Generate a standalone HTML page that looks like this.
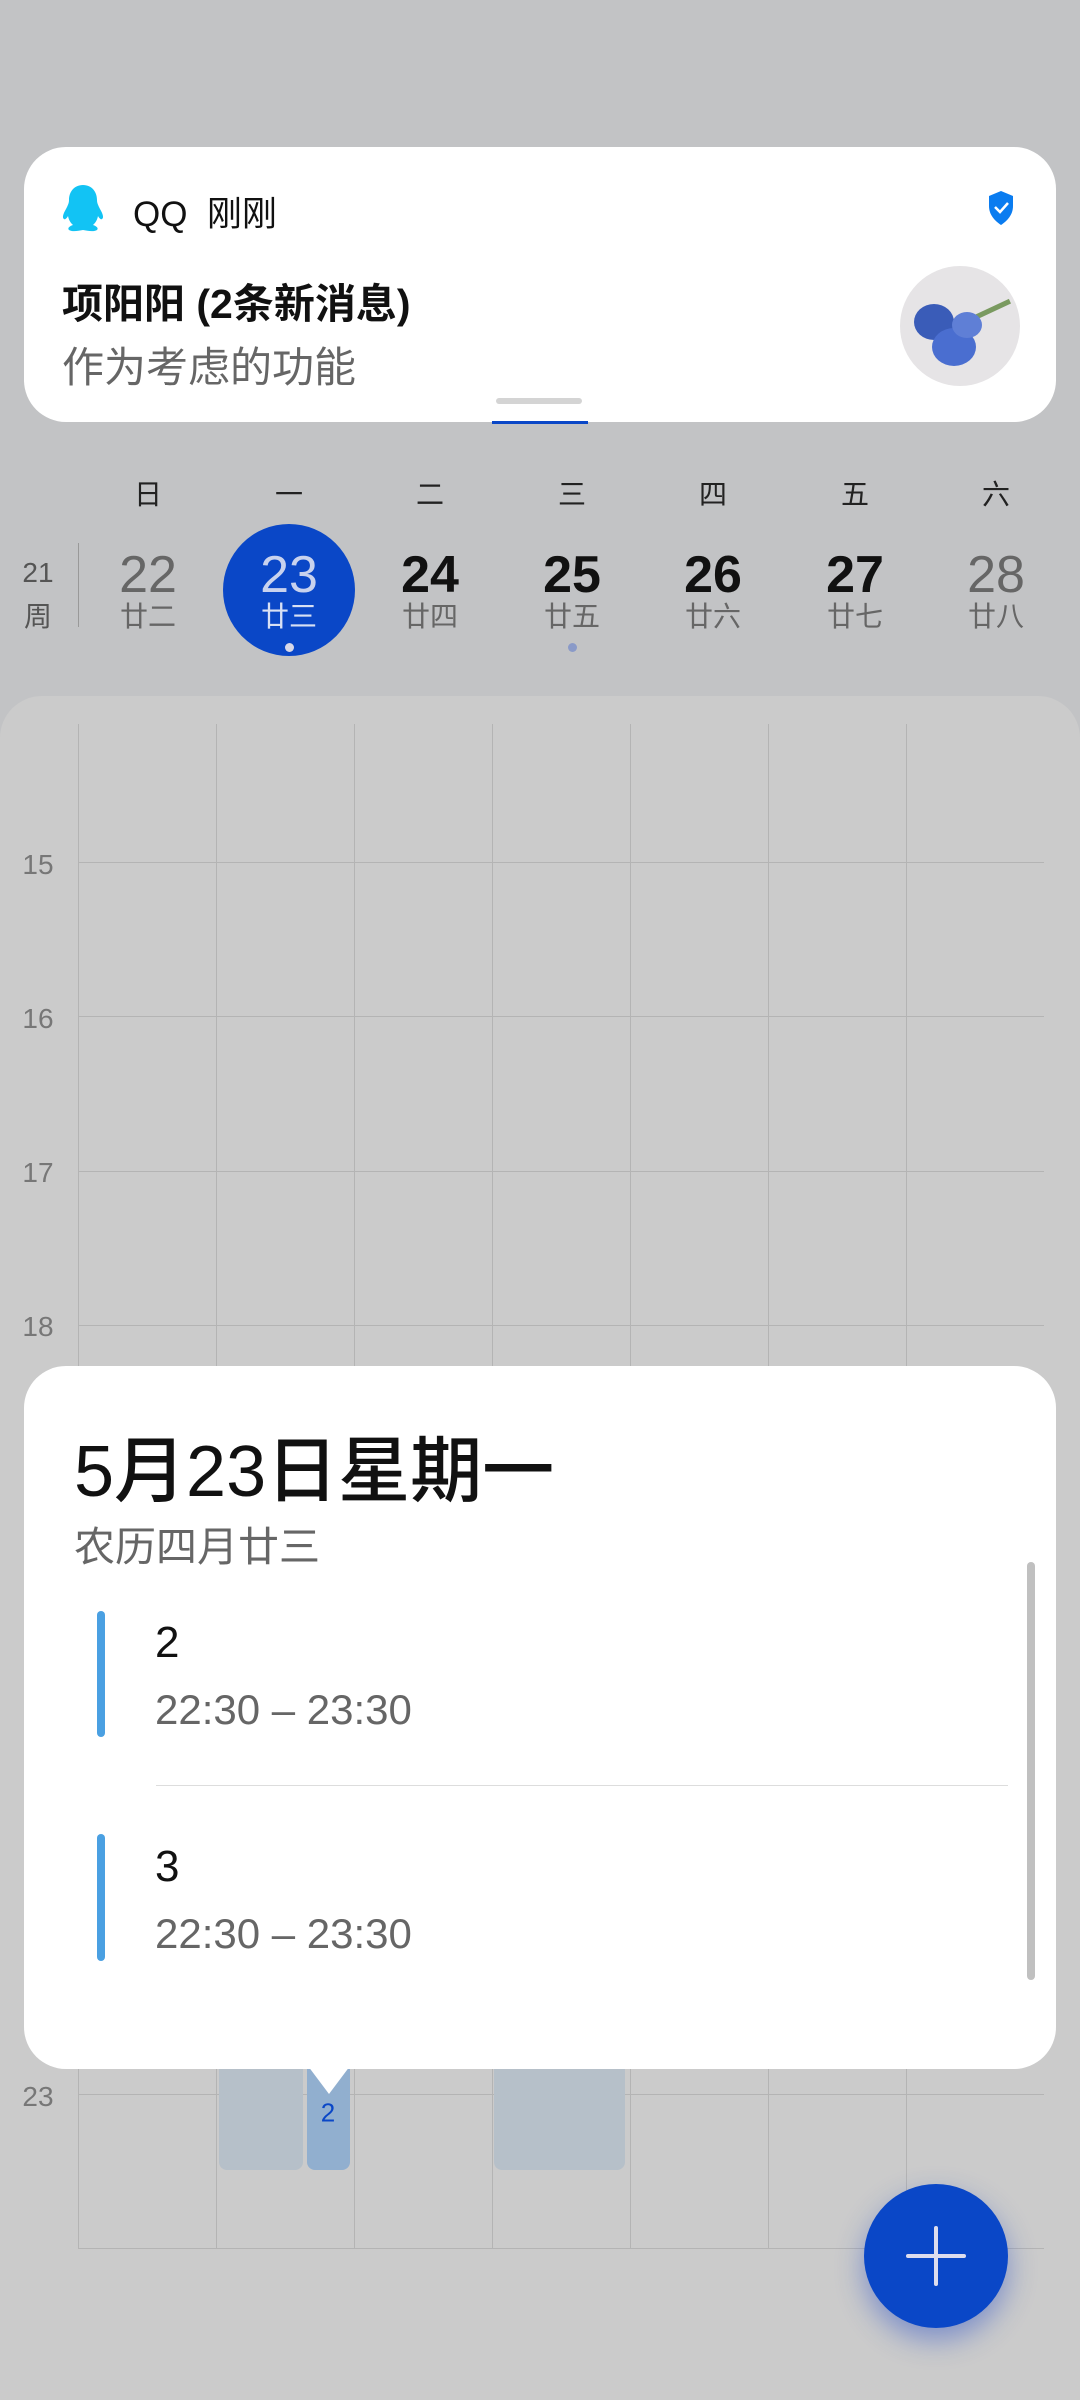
<!DOCTYPE html>
<html><head><meta charset="utf-8"><style>
*{margin:0;padding:0;box-sizing:border-box}
body{width:1080px;height:2400px;background:#c2c3c5;position:relative;overflow:hidden;font-family:"Liberation Sans","Noto Sans CJK SC",sans-serif}
.a{position:absolute}
.c{position:absolute;transform:translate(-50%,-50%);text-align:center;white-space:nowrap}
.vl{position:absolute;width:1px;background:#b4b4b4;top:724px;height:1524px}
.hl{position:absolute;height:1px;background:#b4b4b4;left:78px;width:966px}
.hr{position:absolute;left:38px;transform:translate(-50%,-50%);font-size:28px;color:#777}
</style></head><body>

<div class="a" style="left:24px;top:147px;width:1032px;height:275px;background:#fff;border-radius:42px"></div>
<svg class="a" style="left:62px;top:184px" width="42" height="50" viewBox="0 0 42 50"><path d="M21 1c-9 0-14 7-14 15 0 3-1 5-3 9-3 5-4 9-2 10 1 1 3-1 4-3 1 5 3 7 5 9-3 1-6 3-4 5 3 2 9 1 14 0 5 1 11 2 14 0 2-2-1-4-4-5 2-2 4-4 5-9 1 2 3 4 4 3 2-1 1-5-2-10-2-4-3-6-3-9 0-8-5-15-14-15z" fill="#12c3f4"/></svg>
<div class="a" style="left:133px;top:186px;font-size:35px;color:#111">QQ&nbsp;&nbsp;刚刚</div>
<svg class="a" style="left:987px;top:190px" width="28" height="36" viewBox="0 0 28 36"><path d="M14 1 2 6v10c0 9 6 15 12 19 6-4 12-10 12-19V6z" fill="#0a7cf0"/><path d="M8 17l5 5 8-9" stroke="#fff" stroke-width="2.5" fill="none"/></svg>
<div class="a" style="left:62px;top:270px;font-size:41px;color:#111;font-weight:bold">项阳阳 (2条新消息)</div>
<div class="a" style="left:62px;top:334px;font-size:42px;color:#666">作为考虑的功能</div>
<div class="a" style="left:900px;top:266px;width:120px;height:120px;border-radius:50%;background:#e6e4e6;overflow:hidden">
<div class="a" style="left:68px;top:42px;width:44px;height:5px;background:#7a9a60;transform:rotate(-25deg)"></div>
<div class="a" style="left:14px;top:38px;width:40px;height:36px;border-radius:50%;background:#3a5cb8"></div>
<div class="a" style="left:32px;top:62px;width:44px;height:38px;border-radius:50%;background:#4a6ed0"></div>
<div class="a" style="left:52px;top:46px;width:30px;height:26px;border-radius:50%;background:#5f7fd6"></div>
</div>
<div class="a" style="left:496px;top:398px;width:86px;height:6px;border-radius:3px;background:#d4d4d4"></div>
<div class="a" style="left:492px;top:421px;width:96px;height:3px;background:#0a47c7"></div>

<div class="c" style="left:148px;top:493px;font-size:28px;color:#222">日</div>
<div class="c" style="left:289px;top:493px;font-size:28px;color:#222">一</div>
<div class="c" style="left:430px;top:493px;font-size:28px;color:#222">二</div>
<div class="c" style="left:572px;top:493px;font-size:28px;color:#222">三</div>
<div class="c" style="left:713px;top:493px;font-size:28px;color:#222">四</div>
<div class="c" style="left:855px;top:493px;font-size:28px;color:#222">五</div>
<div class="c" style="left:996px;top:493px;font-size:28px;color:#222">六</div>

<div class="c" style="left:38px;top:573px;font-size:28px;color:#555">21</div>
<div class="c" style="left:38px;top:615px;font-size:28px;color:#555">周</div>
<div class="a" style="left:78px;top:543px;width:1px;height:84px;background:#999"></div>
<div class="a" style="left:223px;top:524px;width:132px;height:132px;border-radius:50%;background:#0a47c7"></div>
<div class="a" style="left:285px;top:643px;width:9px;height:9px;border-radius:50%;background:#d8d8e8"></div>
<div class="a" style="left:568px;top:643px;width:9px;height:9px;border-radius:50%;background:#8a9ac8"></div>

<div class="c" style="left:148px;top:575px;font-size:52px;color:#666;font-weight:500">22</div>
<div class="c" style="left:148px;top:615px;font-size:28px;color:#666">廿二</div>
<div class="c" style="left:289px;top:575px;font-size:52px;color:#c8d2ee;font-weight:500">23</div>
<div class="c" style="left:289px;top:615px;font-size:28px;color:#d8e0f4">廿三</div>
<div class="c" style="left:430px;top:575px;font-size:52px;color:#111;font-weight:bold">24</div>
<div class="c" style="left:430px;top:615px;font-size:28px;color:#666">廿四</div>
<div class="c" style="left:572px;top:575px;font-size:52px;color:#111;font-weight:bold">25</div>
<div class="c" style="left:572px;top:615px;font-size:28px;color:#666">廿五</div>
<div class="c" style="left:713px;top:575px;font-size:52px;color:#111;font-weight:bold">26</div>
<div class="c" style="left:713px;top:615px;font-size:28px;color:#666">廿六</div>
<div class="c" style="left:855px;top:575px;font-size:52px;color:#111;font-weight:bold">27</div>
<div class="c" style="left:855px;top:615px;font-size:28px;color:#666">廿七</div>
<div class="c" style="left:996px;top:575px;font-size:52px;color:#666;font-weight:500">28</div>
<div class="c" style="left:996px;top:615px;font-size:28px;color:#666">廿八</div>

<div class="a" style="left:0;top:696px;width:1080px;height:1704px;background:#cbcbcb;border-radius:42px 42px 0 0"></div>
<div class="vl" style="left:78px"></div><div class="vl" style="left:216px"></div><div class="vl" style="left:354px"></div><div class="vl" style="left:492px"></div><div class="vl" style="left:630px"></div><div class="vl" style="left:768px"></div><div class="vl" style="left:906px"></div>
<div class="hl" style="top:862px"></div><div class="hl" style="top:1016px"></div><div class="hl" style="top:1171px"></div><div class="hl" style="top:1325px"></div><div class="hl" style="top:2094px"></div><div class="hl" style="top:2248px"></div>
<div class="hr" style="top:865px">15</div><div class="hr" style="top:1019px">16</div><div class="hr" style="top:1173px">17</div><div class="hr" style="top:1327px">18</div><div class="hr" style="top:2097px">23</div>

<div class="a" style="left:219px;top:2030px;width:84px;height:140px;background:#b6c0c9;border-radius:0 0 8px 8px"></div>
<div class="a" style="left:307px;top:2030px;width:43px;height:140px;background:#91afcf;border-radius:0 0 8px 8px"></div>
<div class="c" style="left:328px;top:2113px;font-size:26px;color:#0a47c7">2</div>
<div class="a" style="left:494px;top:2030px;width:131px;height:140px;background:#b6c0c9;border-radius:0 0 8px 8px"></div>

<div class="a" style="left:24px;top:1366px;width:1032px;height:703px;background:#fff;border-radius:42px"></div>
<div class="a" style="left:308px;top:2066px;width:0;height:0;border-left:21px solid transparent;border-right:21px solid transparent;border-top:28px solid #fff"></div>
<div class="a" style="left:74px;top:1412px;font-size:72px;color:#111;font-weight:500">5月23日星期一</div>
<div class="a" style="left:74px;top:1513px;font-size:41px;color:#666">农历四月廿三</div>
<div class="a" style="left:97px;top:1611px;width:8px;height:126px;border-radius:4px;background:#4aa0e2"></div>
<div class="a" style="left:155px;top:1618px;font-size:44px;color:#111">2</div>
<div class="a" style="left:155px;top:1686px;font-size:42px;color:#666">22:30 – 23:30</div>
<div class="a" style="left:156px;top:1785px;width:852px;height:1px;background:#ddd"></div>
<div class="a" style="left:97px;top:1834px;width:8px;height:127px;border-radius:4px;background:#4aa0e2"></div>
<div class="a" style="left:155px;top:1842px;font-size:44px;color:#111">3</div>
<div class="a" style="left:155px;top:1910px;font-size:42px;color:#666">22:30 – 23:30</div>
<div class="a" style="left:1027px;top:1562px;width:8px;height:418px;border-radius:4px;background:#c0c0c0"></div>

<div class="a" style="left:864px;top:2184px;width:144px;height:144px;border-radius:50%;background:#0a47c7;box-shadow:0 12px 28px rgba(30,70,200,.45)"></div>
<div class="a" style="left:934px;top:2226px;width:4px;height:60px;background:#dde;border-radius:2px"></div>
<div class="a" style="left:906px;top:2254px;width:60px;height:4px;background:#dde;border-radius:2px"></div>
</body></html>
